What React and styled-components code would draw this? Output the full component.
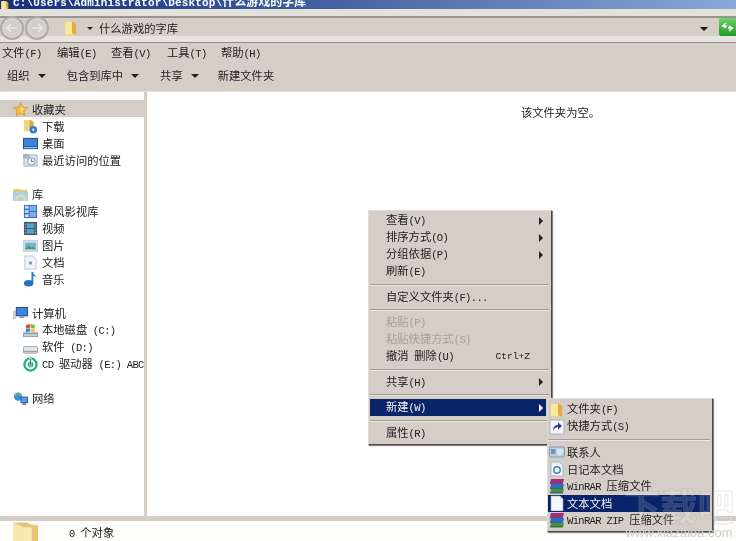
import React from 'react';
import styled, { createGlobalStyle } from 'styled-components';

const FONT = '"Noto Sans CJK SC", "Liberation Mono", monospace';
const MONO = '"Liberation Mono", "Noto Sans CJK SC", monospace';

const GlobalStyle = createGlobalStyle`
  html, body {
    margin: 0;
    padding: 0;
    background: #fff;
  }
`;

const Window = styled.div`
  position: relative;
  width: 736px;
  height: 541px;
  overflow: hidden;
  display: flex;
  flex-direction: column;
  background: #d4cec7;
  color: #222;
  font-family: ${FONT};
  font-size: 11.3px;
  line-height: 17px;
  filter: blur(0.4px);
`;

const Latin = styled.span`
  font-family: ${MONO};
  font-size: 10.5px;
  letter-spacing: -0.65px;
  white-space: pre;
`;

const TitleBar = styled.div`
  height: 9px;
  flex: none;
  display: flex;
  align-items: center;
  gap: 3px;
  overflow: hidden;
  background: linear-gradient(90deg, #14307c 0%, #3d5c9c 40%, #88a8da 100%);
`;

const TitleText = styled.span`
  color: #fff;
  font-family: ${MONO};
  font-weight: 700;
  font-size: 11px;
  line-height: 11px;
  letter-spacing: 0.15px;
  margin-top: -5px;
  white-space: nowrap;
`;

const TitleCjk = styled.span`
  font-family: ${FONT};
  font-size: 12px;
  letter-spacing: 0;
`;

const AddressBar = styled.div`
  height: 34px;
  flex: none;
  box-sizing: border-box;
  display: flex;
  align-items: flex-start;
  background: linear-gradient(#e4e0da 0, #e4e0da 7px, #98948e 7px, #98948e 9px, #d4cec7 9px, #d4cec7 27px, #e8e4df 27px);
  border-bottom: 1px solid #8f8b85;
  padding-top: 7px;
`;

const NavButtons = styled.div`
  display: flex;
  width: 63px;
  flex: none;
`;

const RoundButton = styled.div`
  width: 24px;
  height: 24px;
  box-sizing: border-box;
  margin-right: 1px;
  border-radius: 50%;
  border: 2px solid #aeaaa5;
  background: radial-gradient(circle at 50% 50%, #cfcac4 0, #d4d0ca 55%, #e6e3de 100%);
  display: flex;
  align-items: center;
  justify-content: center;
`;

const Crumb = styled.div`
  flex: 1;
  display: flex;
  align-items: center;
  height: 20px;
  margin-top: 2px;
`;

const CrumbArrow = styled.span`
  width: 0;
  height: 0;
  margin: 0 6px 0 8px;
  border-left: 3px solid transparent;
  border-right: 3px solid transparent;
  border-top: 3px solid #222;
`;

const DropArrow = styled.span`
  width: 0;
  height: 0;
  margin: 11px 11px 0 0;
  border-left: 4px solid transparent;
  border-right: 4px solid transparent;
  border-top: 4px solid #111;
`;

const GoButton = styled.div`
  width: 17px;
  height: 18px;
  margin-top: 2px;
  flex: none;
  background: linear-gradient(#6fd06a, #1c9c22);
  border-radius: 2px 0 0 2px;
  display: flex;
  align-items: center;
  justify-content: center;
`;

const MenuBar = styled.div`
  height: 21px;
  flex: none;
  display: flex;
  align-items: center;
  padding: 0 0 0 2px;
`;

const MenuBarItem = styled.span`
  width: ${p => p.$width}px;
  flex: none;
  white-space: nowrap;
`;

const ToolBar = styled.div`
  height: 27px;
  flex: none;
  display: flex;
  align-items: center;
  padding-left: 7px;
  box-sizing: border-box;
  padding-bottom: 4px;
`;

const ToolItem = styled.span`
  display: flex;
  align-items: center;
  margin-right: ${p => p.$gap}px;
  white-space: nowrap;
`;

const ToolArrow = styled.span`
  width: 0;
  height: 0;
  margin-left: 8px;
  border-left: 4px solid transparent;
  border-right: 4px solid transparent;
  border-top: 4px solid #222;
`;

const Main = styled.div`
  flex: 1;
  min-height: 0;
  display: flex;
  border-top: 1px solid #e4e0da;
`;

const Sidebar = styled.nav`
  width: 144px;
  flex: none;
  box-sizing: border-box;
  padding-top: 8px;
  background: #fff;
  overflow: hidden;
`;

const Group = styled.div`
  margin-bottom: 17px;
`;

const Row = styled.div`
  height: 17px;
  box-sizing: border-box;
  padding-top: 1px;
  display: flex;
  align-items: center;
  gap: 4px;
  padding-left: ${p => (p.$head ? 13 : 23)}px;
  background: ${p => (p.$active ? '#d4cec7' : 'transparent')};
  white-space: nowrap;
`;

const Content = styled.main`
  flex: 1;
  margin-left: 3px;
  background: #fff;
  display: flex;
  justify-content: center;
  padding: 12px 0 0 238px;
`;

const EmptyText = styled.span`
  height: 17px;
`;

const StatusBar = styled.footer`
  height: 25px;
  flex: none;
  box-sizing: border-box;
  border-top: 5px solid #d4cec7;
  background: #fdfdfb;
  display: flex;
  align-items: flex-start;
  padding-left: 13px;
`;

const StatusText = styled.span`
  margin: 3px 0 0 31px;
`;

const Menu = styled.div`
  position: absolute;
  left: ${p => p.$left}px;
  top: ${p => p.$top}px;
  width: ${p => p.$width}px;
  box-sizing: border-box;
  padding: ${p => p.$padTop}px 2px 2px ${p => p.$padLeft}px;
  background: #d4cec7;
  border: 1px solid #dfdbd5;
  border-right-color: #4c4a47;
  border-bottom-color: #4c4a47;
  box-shadow: 1px 1px 1px #8a8681;
`;

const MenuItem = styled.div`
  height: 17px;
  display: flex;
  align-items: center;
  gap: 2px;
  margin-right: ${p => p.$trim}px;
  padding-left: ${p => p.$indent}px;
  padding-right: 3px;
  white-space: nowrap;
  background: ${p => (p.$selected ? '#0a246a' : 'transparent')};
  color: ${p => (p.$selected ? '#f4f4f4' : p.$disabled ? '#a5a19b' : '#222')};
`;

const MenuLabel = styled.span`
  flex: 1;
`;

const Shortcut = styled.span`
  margin-right: 13px;
  font-family: ${MONO};
  font-size: 9.6px;
`;

const SubArrow = styled.span`
  width: 0;
  height: 0;
  border-top: 4px solid transparent;
  border-bottom: 4px solid transparent;
  border-left: 4px solid ${p => (p.$selected ? '#fff' : '#222')};
`;

const Separator = styled.div`
  height: 8.5px;
  display: flex;
  align-items: center;
  &::after {
    content: '';
    flex: 1;
    height: 1px;
    background: #a09c96;
    box-shadow: 0 1px 0 #eae6e0;
  }
`;

const Watermark = styled.div`
  position: absolute;
  left: 622px;
  top: 484px;
  width: 114px;
  text-align: center;
  pointer-events: none;
  font-family: "Noto Sans CJK SC", sans-serif;
  color: rgba(255, 255, 255, 0.14);
`;

const WatermarkBig = styled.div`
  font-size: 37px;
  line-height: 42px;
  font-weight: 700;
  -webkit-text-stroke: 1px rgba(150, 150, 150, 0.22);
`;

const WatermarkUrl = styled.div`
  font-family: "Liberation Sans", sans-serif;
  font-size: 13px;
  line-height: 14px;
  color: #cfcdca;
`;

// ---- icons ----

const Svg = ({ size = 16, children }) => (
  <svg width={size} height={size} viewBox="0 0 16 16" style={{ flex: 'none' }}>{children}</svg>
);

const icons = {
  folder: <><path d="M2 2h8l3 3v10H2z" fill="#f4d774"/><path d="M9 1l4 3v11l-4-2z" fill="#e0ae3c"/><path d="M2 2h7v12H2z" fill="#fbe79c"/></>,
  bigFolder: <><path d="M0 2h16v14H0z" fill="#f1e2a8"/><path d="M0 1l13 4v11H0z" fill="#f6eab4"/><path d="M12 3h4v13h-4z" fill="#e4c678"/><path d="M0 1h9l5 3H7z" fill="#e0c47c"/></>,
  star: <><path d="M8 .5l2.300 4.900 5.400.6-4 3.600 1.100 5.300L8 12.200l-4.800 2.700 1.100-5.300-4-3.600 5.400-.6z" fill="#f4b63c" stroke="#c98a20" strokeWidth=".6"/><path d="M8 3.500l1.400 3 3.200.4-2.400 2.200.7 3.200L8 10.700z" fill="#fbdc7c"/></>,
  download: <><path d="M1 1h8l3 3v9H1z" fill="#f3d67c"/><path d="M7 1l4 2v10l-4-1z" fill="#d9a83f"/><circle cx="11" cy="11.500" r="4" fill="#2c7fd0"/><path d="M9.500 10.500h3L11 13.500z" fill="#d4ecff"/></>,
  desktop: <><rect x="0" y="2" width="16" height="12" fill="#1c4ea0"/><rect x="1" y="3" width="14" height="8" fill="#3f82d4"/><rect x="1" y="12" width="14" height="1" fill="#d8e0ea"/></>,
  recent: <><rect x="1" y="2" width="14" height="12" fill="#d8e0ea" stroke="#a8b4c2"/><rect x="0" y="1" width="7" height="5" fill="#a6b6c8"/><circle cx="9" cy="9" r="4" fill="#f2f5f9" stroke="#7f98b4"/><path d="M9 6.500V9h2.500" stroke="#47688c" fill="none"/></>,
  library: <><path d="M0 4l1-2h6l1 1h7v3H0z" fill="#e6c770"/><path d="M0 5h16v10H0z" fill="#a9d1ea"/><path d="M2 15c0-6 5-7 7-7s5 2 5 7h-2c0-3-2-5-3-5s-5 2-5 5z" fill="#eeda98"/></>,
  video: <><rect x="1" y="1" width="14" height="14" fill="#2f6cc4"/><rect x="2" y="2" width="4" height="3" fill="#c6def6"/><rect x="2" y="6.500" width="4" height="3" fill="#c6def6"/><rect x="2" y="11" width="4" height="3" fill="#c6def6"/><rect x="7" y="2" width="7" height="5.500" fill="#7eaee4"/><rect x="7" y="8.500" width="7" height="5.500" fill="#7eaee4"/></>,
  film: <><rect x="1" y="1" width="14" height="14" fill="#42566c"/><rect x="4" y="2.500" width="8" height="5" fill="#58a2c8"/><rect x="4" y="8.500" width="8" height="5" fill="#58a2c8"/><path d="M2 3h1v1H2zM2 6h1v1H2zM2 9h1v1H2zM2 12h1v1H2zM13 3h1v1h-1zM13 6h1v1h-1zM13 9h1v1h-1zM13 12h1v1h-1z" fill="#d0d8e0"/></>,
  picture: <><rect x="0" y="3" width="16" height="11" fill="#dfe5ea" stroke="#9aa6b0" strokeWidth=".7"/><rect x="2" y="5" width="12" height="7" fill="#6db6d8"/><path d="M2 12l4-4 3 2 2-1 3 3z" fill="#4a9a70"/></>,
  doc: <><path d="M2 1h8l4 3v11H2z" fill="#f0f4f8" stroke="#a4b2c0" strokeWidth=".7"/><rect x="6.500" y="7" width="3" height="3" fill="#6f90b4"/></>,
  music: <><path d="M9 0h2c0 3 2 3 4 6-1-1-3-2-4-1.500V12H9z" fill="#2f80d4"/><ellipse cx="6" cy="12" rx="5" ry="3.500" fill="#2472c4"/></>,
  computer: <><rect x="0" y="5" width="3" height="9" fill="#c8cfd8"/><rect x="3" y="1" width="13" height="10" fill="#22489c"/><rect x="4" y="2" width="11" height="8" fill="#3f86d8"/><rect x="7" y="11" width="5" height="2" fill="#8a97a6"/></>,
  disk: <><rect x="0" y="10" width="16" height="5" fill="#8ea0ae"/><rect x="1" y="12" width="14" height="2" fill="#c8d4dc"/><path d="M3 2l4.500-1v4L3 6z" fill="#e84c3c"/><path d="M8 1l4.500 1v4L8 5z" fill="#6cc04a"/><path d="M3 6.500l4.500-1V9L3 10z" fill="#3f8ae0"/><path d="M8 5.500l4.500 1V10L8 9z" fill="#f4c43c"/></>,
  drive: <><rect x="0.500" y="7" width="15" height="7" rx="1" fill="#e4e8ea" stroke="#8a8f94" strokeWidth=".8"/><rect x="1" y="11.500" width="14" height="1.500" fill="#9aa2a8"/></>,
  cd: <><circle cx="8" cy="8" r="6.500" fill="none" stroke="#18b07c" strokeWidth="2.400"/><circle cx="8" cy="8" r="3" fill="#18b07c"/><rect x="7" y="1" width="2" height="9" fill="#fff"/><rect x="7.500" y="2" width="1" height="7" fill="#0c6a50"/></>,
  network: <><circle cx="5.500" cy="6" r="4.500" fill="#3f8ed8"/><path d="M1.500 5c2-2 5-2 7 0" stroke="#7cc060" fill="none" strokeWidth="1.500"/><rect x="8" y="6" width="8" height="7" fill="#2a58a8"/><rect x="9" y="7" width="6" height="5" fill="#58a0e0"/><rect x="10" y="13" width="4" height="2" fill="#7a8694"/></>,
  shortcut: <><rect x="1" y="1" width="14" height="14" fill="#f4f6fa" stroke="#9aa4b0" strokeWidth=".8"/><path d="M4 12c0-4 2-6 5-6V3.500L13 7l-4 3.500V8c-2 0-4 1-5 4z" fill="#2a3a90"/></>,
  contact: <><rect x="0.500" y="3" width="15" height="10" rx="1" fill="#b8d0e4" stroke="#7890a8" strokeWidth=".8"/><rect x="2" y="5" width="4.500" height="5" fill="#6f94b8"/><path d="M8 6h6M8 8h6M8 10h5" stroke="#f4f8fc"/></>,
  journal: <><path d="M2 1h8l4 3v11H2z" fill="#f0f4f8" stroke="#94a2b0" strokeWidth=".7"/><circle cx="8" cy="9" r="3.200" fill="none" stroke="#3d80b8" strokeWidth="1.400"/></>,
  rar: <><path d="M2 1h13l-1 4H1z" fill="#a02a8c"/><path d="M2 6h13l-1 4H1z" fill="#2c6cc0"/><path d="M2 11h13l-1 4H1z" fill="#3a9a48"/><path d="M1 5.500h13M1 10.500h13M1 15h13" stroke="#2a2a2a" fill="none" strokeWidth=".7"/></>,
  text: <><path d="M2 1h9l3 3v12H2z" fill="#f4f8fc" stroke="#8ca4bc" strokeWidth=".6"/><path d="M11 1l3 3h-3z" fill="#c4d4e4"/></>,
};

const Icon = ({ name, size }) => <Svg size={size}>{icons[name]}</Svg>;

// latin runs are set tighter than the chinese ones, like the reference's bitmap font
const Txt = ({ children }) => children.split(/([\x00-\x7f]+)/).map((part, i) => (
  /[\x00-\x7f]/.test(part) ? <Latin key={i}>{part}</Latin> : part
));

// ---- data ----

const menuBarItems = [['文件(F)', 55], ['编辑(E)', 54], ['查看(V)', 56], ['工具(T)', 54], ['帮助(H)', 60]];

const toolItems = [
  { label: '组织', arrow: true, gap: 21 },
  { label: '包含到库中', arrow: true, gap: 21 },
  { label: '共享', arrow: true, gap: 19 },
  { label: '新建文件夹', gap: 0 },
];

const navGroups = [
  { head: ['star', '收藏夹'], active: true, items: [['download', '下载'], ['desktop', '桌面'], ['recent', '最近访问的位置']] },
  { head: ['library', '库'], items: [['video', '暴风影视库'], ['film', '视频'], ['picture', '图片'], ['doc', '文档'], ['music', '音乐']] },
  { head: ['computer', '计算机'], items: [['disk', '本地磁盘 (C:)'], ['drive', '软件 (D:)'], ['cd', 'CD 驱动器 (E:) ABC']] },
  { head: ['network', '网络'], items: [] },
];

const mainMenu = [
  { label: '查看(V)', sub: true },
  { label: '排序方式(O)', sub: true },
  { label: '分组依据(P)', sub: true },
  { label: '刷新(E)' },
  { sep: true },
  { label: '自定义文件夹(F)...' },
  { sep: true },
  { label: '粘贴(P)', disabled: true },
  { label: '粘贴快捷方式(S)', disabled: true },
  { label: '撤消 删除(U)', shortcut: 'Ctrl+Z' },
  { sep: true },
  { label: '共享(H)', sub: true },
  { sep: true },
  { label: '新建(W)', sub: true, selected: true },
  { sep: true },
  { label: '属性(R)' },
];

const newMenu = [
  { icon: 'folder', label: '文件夹(F)' },
  { icon: 'shortcut', label: '快捷方式(S)' },
  { sep: true },
  { icon: 'contact', label: '联系人' },
  { icon: 'journal', label: '日记本文档' },
  { icon: 'rar', label: 'WinRAR 压缩文件' },
  { icon: 'text', label: '文本文档', selected: true },
  { icon: 'rar', label: 'WinRAR ZIP 压缩文件' },
];

const MenuEntries = ({ items, indent, trim }) => items.map((item, i) => (
  item.sep ? <Separator key={i} /> : (
    <MenuItem key={i} $indent={indent} $trim={trim} $selected={item.selected} $disabled={item.disabled}>
      {item.icon && <Icon name={item.icon} />}
      <MenuLabel><Txt>{item.label}</Txt></MenuLabel>
      {item.shortcut && <Shortcut>{item.shortcut}</Shortcut>}
      {item.sub && <SubArrow $selected={item.selected} />}
    </MenuItem>
  )
));

const App = () => (
  <Window>
    <GlobalStyle />
    <TitleBar>
      <Icon name="folder" size={10} />
      <TitleText>C:\Users\Administrator\Desktop\<TitleCjk>什么游戏的字库</TitleCjk></TitleText>
    </TitleBar>
    <AddressBar>
      <NavButtons>
        <RoundButton>
          <svg width="12" height="10" viewBox="0 0 12 10"><path d="M5 1L1 5l4 4M1 5h10" stroke="#ece9e4" strokeWidth="1.600" fill="none"/></svg>
        </RoundButton>
        <RoundButton>
          <svg width="12" height="10" viewBox="0 0 12 10"><path d="M7 1l4 4-4 4M11 5H1" stroke="#ece9e4" strokeWidth="1.600" fill="none"/></svg>
        </RoundButton>
      </NavButtons>
      <Crumb>
        <Icon name="folder" />
        <CrumbArrow />
        <span>什么游戏的字库</span>
      </Crumb>
      <DropArrow />
      <GoButton>
        <svg width="13" height="10" viewBox="0 0 13 10"><path d="M5 1L1.500 4 5 6M1.500 4H6M8 9l3.500-3L8 4M11.500 6H7" stroke="#fff" strokeWidth="1.300" fill="none"/></svg>
      </GoButton>
    </AddressBar>
    <MenuBar>
      {menuBarItems.map(([label, width]) => <MenuBarItem key={label} $width={width}><Txt>{label}</Txt></MenuBarItem>)}
    </MenuBar>
    <ToolBar>
      {toolItems.map(t => (
        <ToolItem key={t.label} $gap={t.gap}>
          {t.label}
          {t.arrow && <ToolArrow />}
        </ToolItem>
      ))}
    </ToolBar>
    <Main>
      <Sidebar>
        {navGroups.map(g => (
          <Group key={g.head[1]}>
            <Row $head $active={g.active}><Icon name={g.head[0]} size={15} />{g.head[1]}</Row>
            {g.items.map(([icon, label]) => (
              <Row key={label}><Icon name={icon} size={15} /><span><Txt>{label}</Txt></span></Row>
            ))}
          </Group>
        ))}
      </Sidebar>
      <Content>
        <EmptyText>该文件夹为空。</EmptyText>
      </Content>
    </Main>
    <StatusBar>
      <Icon name="bigFolder" size={25} />
      <StatusText><Txt>0 个对象</Txt></StatusText>
    </StatusBar>
    <Menu $left={368} $top={210} $width={184} $padTop={1} $padLeft={1}>
      <MenuEntries items={mainMenu} indent={16} trim={3} />
    </Menu>
    <Menu $left={547} $top={398} $width={166} $padTop={2} $padLeft={0}>
      <MenuEntries items={newMenu} indent={1} trim={0} />
    </Menu>
    <Watermark>
      <WatermarkBig>下载吧</WatermarkBig>
      <WatermarkUrl>www.xiazaiba.com</WatermarkUrl>
    </Watermark>
  </Window>
);

export default App;
